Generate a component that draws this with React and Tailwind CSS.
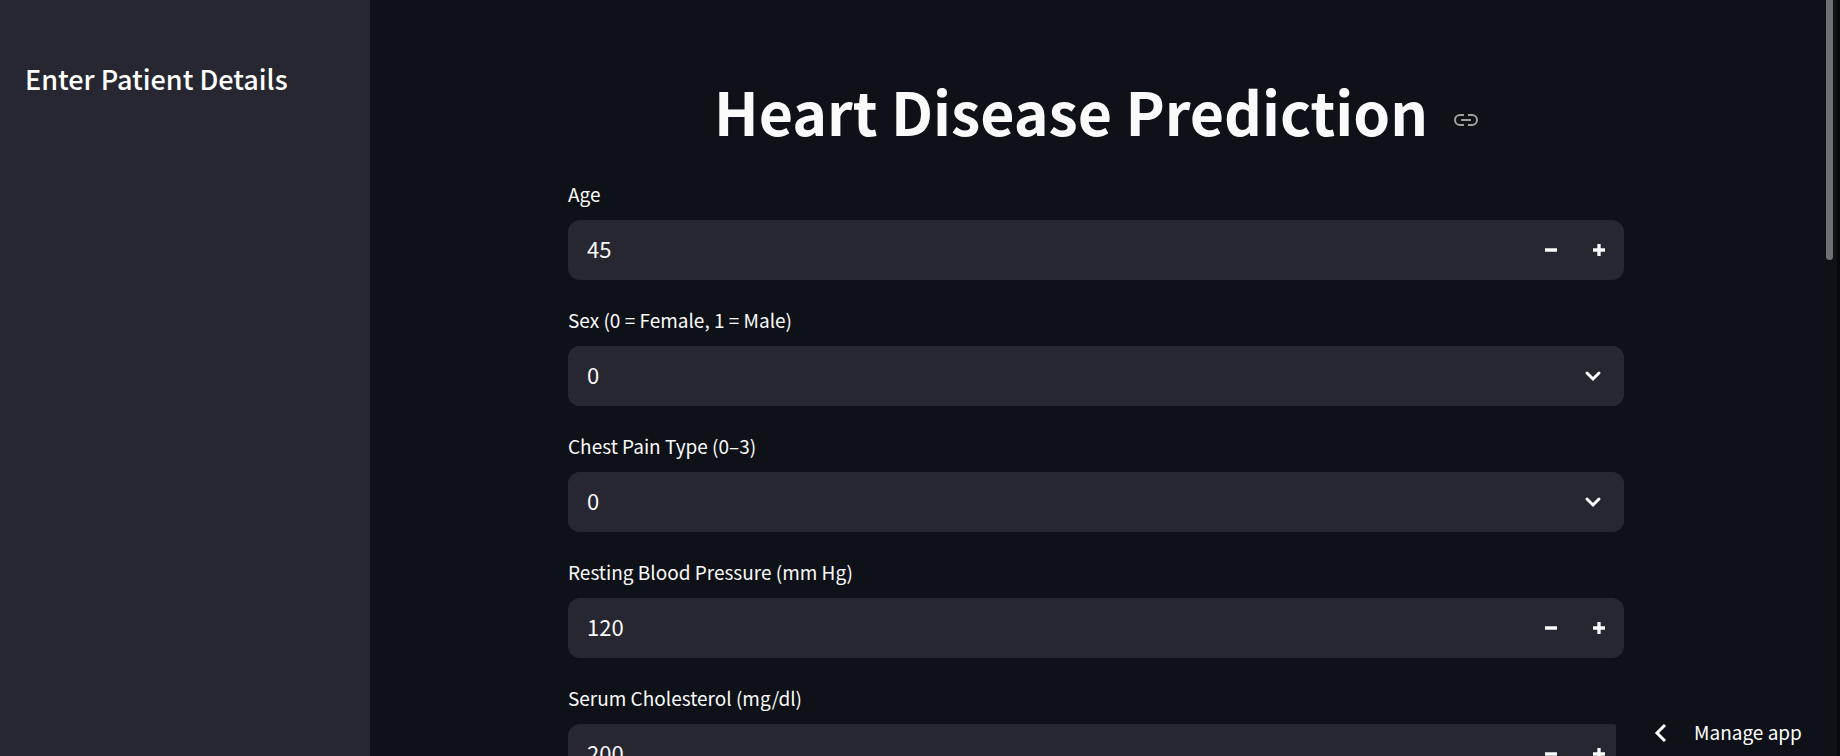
import { useState } from "react";

const fields = [
  { id: "age", label: "Age", type: "number", value: 45 },
  { id: "sex", label: "Sex (0 = Female, 1 = Male)", type: "select", options: [0, 1] },
  { id: "cp", label: "Chest Pain Type (0–3)", type: "select", options: [0, 1, 2, 3] },
  { id: "trestbps", label: "Resting Blood Pressure (mm Hg)", type: "number", value: 120 },
  { id: "chol", label: "Serum Cholesterol (mg/dl)", type: "number", value: 200 },
];

function NumberField({ id, label, initial }) {
  const [value, setValue] = useState(initial);
  return (
    <div className="flex h-[60px] overflow-hidden rounded-xl bg-[#262730] pr-px">
      <input
        id={id}
        inputMode="numeric"
        value={value}
        onChange={(e) => setValue(Number(e.target.value) || 0)}
        className="min-w-0 flex-1 bg-transparent px-[19px] pb-1 text-[22px] leading-8 outline-none"
      />
      <button
        type="button"
        aria-label={`Decrease ${label}`}
        onClick={() => setValue(value - 1)}
        className="flex w-12 items-center justify-center"
      >
        <svg viewBox="0 0 8 8" className="size-3" fill="currentColor">
          <path d="M0 2.8h8v2.4H0z" />
        </svg>
      </button>
      <button
        type="button"
        aria-label={`Increase ${label}`}
        onClick={() => setValue(value + 1)}
        className="flex w-12 items-center justify-center"
      >
        <svg viewBox="0 0 8 8" className="size-3" fill="currentColor">
          <path d="M2.9 0v2.9H0v2.2h2.9V8h2.2V5.1H8V2.9H5.1V0z" />
        </svg>
      </button>
    </div>
  );
}

function SelectField({ id, options }) {
  return (
    <div className="grid h-[60px] items-center rounded-xl bg-[#262730]">
      <select
        id={id}
        className="col-start-1 row-start-1 h-full w-full appearance-none rounded-xl bg-[#262730] px-[19px] pb-1 text-[22px] leading-8 outline-none"
      >
        {options.map((o) => (
          <option key={o}>{o}</option>
        ))}
      </select>
      <svg
        viewBox="0 0 24 24"
        className="pointer-events-none col-start-1 row-start-1 mr-[19px] size-6 justify-self-end"
        fill="none"
        stroke="currentColor"
        strokeWidth="3"
        strokeLinecap="round"
        strokeLinejoin="miter"
      >
        <path d="M6 9l6 6 6-6" />
      </svg>
    </div>
  );
}

export default function App() {
  return (
    <div className="flex h-screen overflow-hidden bg-[#0e1117] font-['Noto_Sans_CJK_SC',sans-serif] text-[#fafafa]">
      <aside className="w-[370px] shrink-0 bg-[#262730] px-[25px] pt-[61px]">
        <h2 className="text-[27px] leading-9 font-medium text-white">Enter Patient Details</h2>
      </aside>

      <main className="min-w-0 flex-1 overflow-hidden px-12 pt-[71px]">
        <div className="mx-auto max-w-[1056px]">
          <h1 className="flex items-center justify-center gap-[26px] pb-[27px] text-[59px] leading-20 font-bold">
            Heart Disease Prediction
            <a href="#heart-disease-prediction" aria-label="Link to heading" className="mt-[18px] text-[#a0a19f]">
              <svg
                viewBox="0 0 24 24"
                className="block size-6"
                fill="none"
                stroke="currentColor"
                strokeWidth="2"
                strokeLinecap="butt"
              >
                <path d="M10 7H6a5 5 0 0 0 0 10h4M14 7h4a5 5 0 0 1 0 10h-4M7 12h10" />
              </svg>
            </a>
          </h1>
          <form className="flex flex-col gap-6">
            {fields.map((f) => (
              <div key={f.id} className="flex flex-col gap-2.5">
                <label htmlFor={f.id} className="text-[19px] leading-8">
                  {f.label}
                </label>
                {f.type === "number" ? (
                  <NumberField id={f.id} label={f.label} initial={f.value} />
                ) : (
                  <SelectField id={f.id} options={f.options} />
                )}
              </div>
            ))}
          </form>
        </div>
      </main>

      <div aria-hidden="true" className="w-[15px] shrink-0 px-1">
        <div className="h-[260px] rounded-b-full bg-[#6f7073]" />
      </div>
      <div aria-hidden="true" className="w-[3px] shrink-0 bg-[#07080b]" />

      <button
        type="button"
        className="absolute right-[3px] bottom-0 flex h-12 w-[221px] items-center gap-[22px] bg-[#0e1117] pl-8 text-[19px] leading-7 text-white"
      >
        <svg
          viewBox="0 0 24 24"
          className="size-6"
          fill="none"
          stroke="currentColor"
          strokeWidth="3"
        >
          <path d="M17 5l-8 8 8 8" />
        </svg>
        Manage app
      </button>
    </div>
  );
}
